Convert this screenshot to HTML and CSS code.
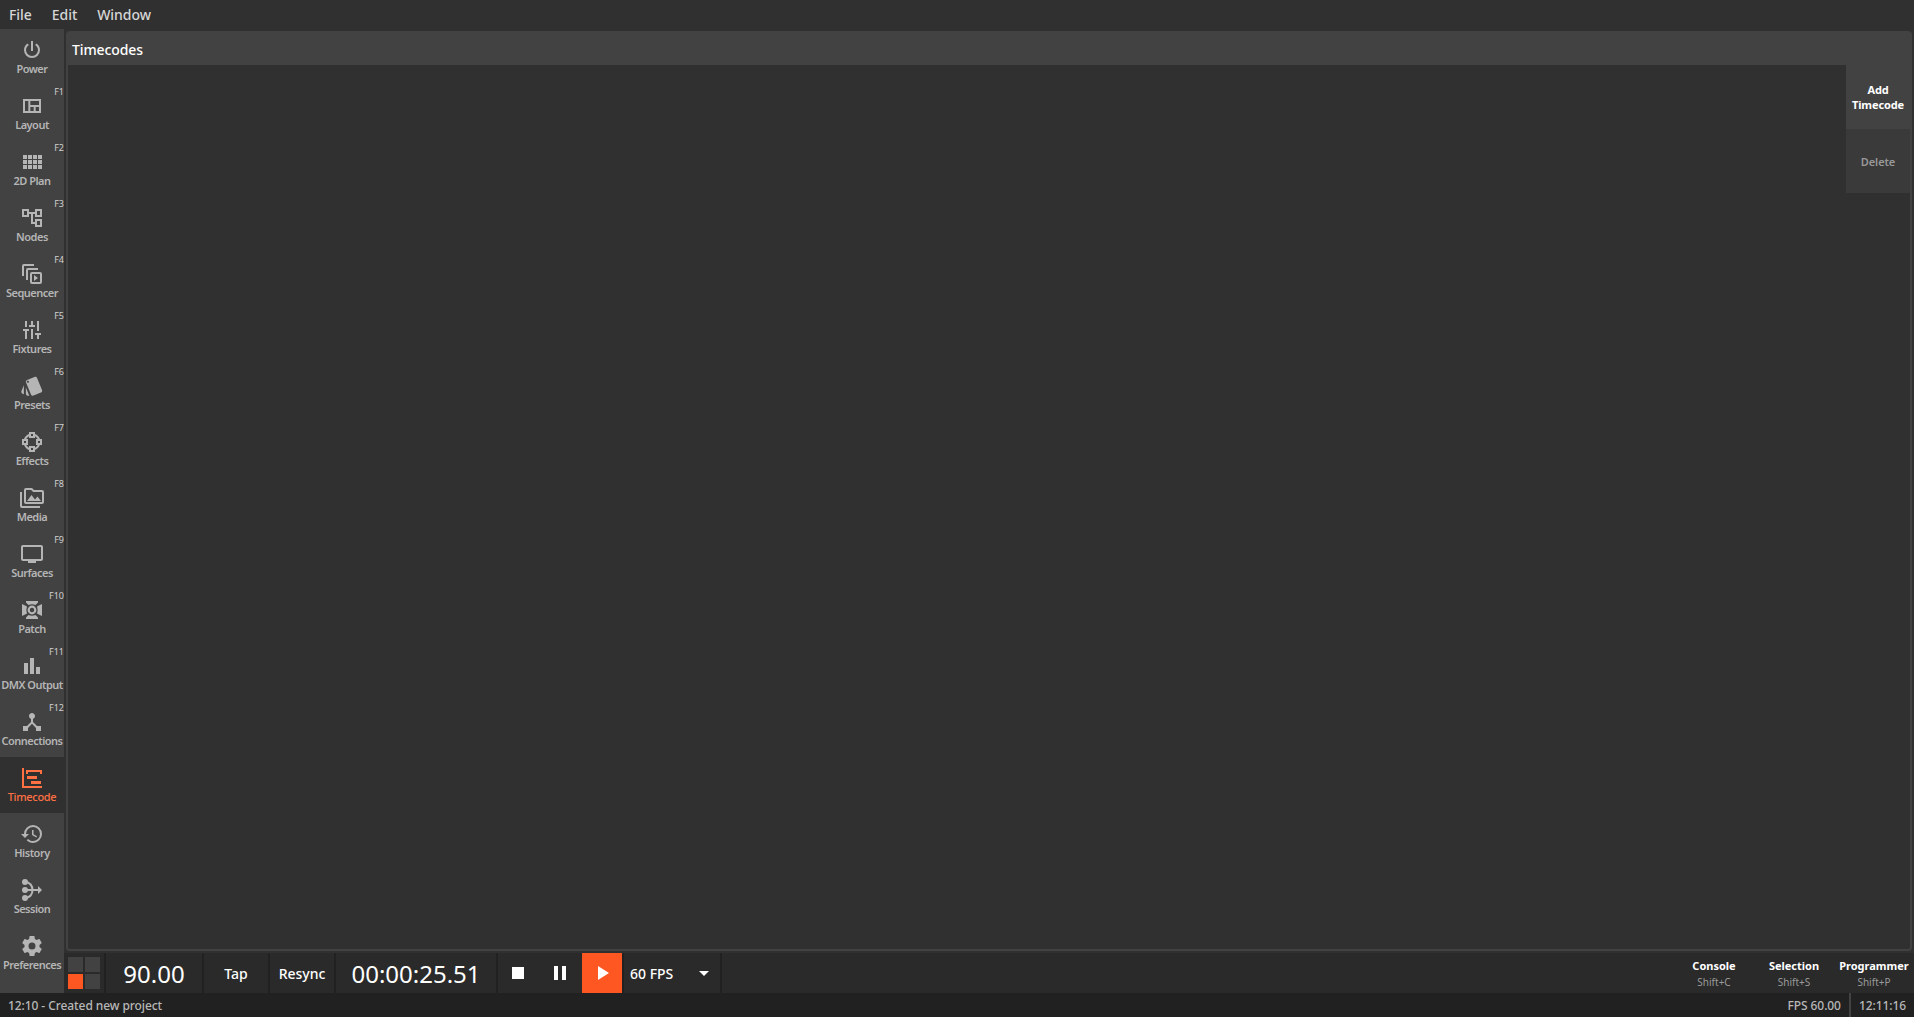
FILE: index.html
```html
<!DOCTYPE html>
<html lang="en">
<head>
<meta charset="utf-8">
<title>Timecodes</title>
<link rel="stylesheet" href="styles.css">
</head>
<body>
<nav class="menubar"><span>File</span><span>Edit</span><span>Window</span></nav>
<div class="workspace">
  <aside class="sidebar">
    <div class="nav-item"><svg viewBox="0 0 24 24"><path d="M16.56,5.44L15.11,6.89C16.84,7.94 18,9.83 18,12A6,6 0 0,1 12,18A6,6 0 0,1 6,12C6,9.83 7.16,7.94 8.88,6.88L7.44,5.44C5.36,6.88 4,9.28 4,12A8,8 0 0,0 12,20A8,8 0 0,0 20,12C20,9.28 18.64,6.88 16.56,5.44M13,3H11V13H13"/></svg><span>Power</span></div>
    <div class="nav-item"><kbd>F1</kbd><svg viewBox="0 0 24 24"><path d="M3,5v14h18V5H3z M8.33,17H5V7h3.33V17z M13.67,17h-3.33v-4h3.33V17z M19,17h-3.33v-4H19V17z M19,11h-8.67V7H19V11z"/></svg><span>Layout</span></div>
    <div class="nav-item"><kbd>F2</kbd><svg viewBox="0 0 24 24"><path d="M3 9h4V5H3v4zm0 5h4v-4H3v4zm5 0h4v-4H8v4zm5 0h4v-4h-4v4zM8 9h4V5H8v4zm5-4v4h4V5h-4zm5 9h4v-4h-4v4zM3 19h4v-4H3v4zm5 0h4v-4H8v4zm5 0h4v-4h-4v4zm5 0h4v-4h-4v4zm0-14v4h4V5h-4z"/></svg><span>2D Plan</span></div>
    <div class="nav-item"><kbd>F3</kbd><svg viewBox="0 0 24 24"><path d="M22 11V3h-7v3H9V3H2v8h7V8h2v10h4v3h7v-8h-7v3h-2V8h2v3h7zM7 9H4V5h3v4zm10 6h3v4h-3v-4zm0-10h3v4h-3V5z"/></svg><span>Nodes</span></div>
    <div class="nav-item"><kbd>F4</kbd><svg viewBox="0 0 24 24"><path d="M4,2A2,2 0 0 0 2,4V14H4V4H14V2Z M8,6A2,2 0 0 0 6,8V18H8V8H18V6Z M12,10A2,2 0 0 0 10,12V20A2,2 0 0 0 12,22H20A2,2 0 0 0 22,20V12A2,2 0 0 0 20,10Z M12,12H20V20H12Z M14,13V19L18,16Z"/></svg><span>Sequencer</span></div>
    <div class="nav-item"><kbd>F5</kbd><svg viewBox="0 0 24 24"><path d="M5,3H7V9H5Z M3,11H9V13H7V21H5V13H3Z M11,3H13V7H15V9H9V7H11Z M11,11H13V21H11Z M17,3H19V13H17Z M15,15H21V17H19V21H17V17H15Z"/></svg><span>Fixtures</span></div>
    <div class="nav-item"><kbd>F6</kbd><svg viewBox="0 0 24 24"><path d="M2.53 19.65l1.34.56v-9.03l-2.43 5.86c-.41 1.02.08 2.19 1.09 2.61zm19.5-3.7L17.07 3.98c-.31-.75-1.04-1.21-1.81-1.23-.26 0-.53.04-.79.15L7.1 5.95c-.75.31-1.21 1.03-1.23 1.8-.01.27.04.54.15.8l4.96 11.97c.31.76 1.05 1.22 1.83 1.23.26 0 .52-.05.77-.15l7.36-3.05c1.02-.42 1.51-1.59 1.09-2.6zM7.88 8.75c-.55 0-1-.45-1-1s.45-1 1-1 1 .45 1 1-.45 1-1 1zm-2 11c0 1.1.9 2 2 2h1.45l-3.45-8.34v6.34z"/></svg><span>Presets</span></div>
    <div class="nav-item"><kbd>F7</kbd><svg viewBox="0 0 24 24"><path d="M9,2V4.06C6.72,4.92 4.92,6.72 4.05,9H2V15H4.06C4.92,17.28 6.72,19.09 9,19.95V22H15V19.94C17.28,19.08 19.09,17.28 19.95,15H22V9H19.94C19.08,6.72 17.28,4.92 15,4.05V2M11,4H13V6H11M9,6.25V8H15V6.25C16.18,6.86 17.14,7.82 17.75,9H16V15H17.75C17.14,16.18 16.18,17.14 15,17.75V16H9V17.75C7.82,17.14 6.86,16.18 6.25,15H8V9H6.25C6.86,7.82 7.82,6.86 9,6.25M4,11H6V13H4M18,11H20V13H18M11,18H13V20H11"/></svg><span>Effects</span></div>
    <div class="nav-item"><kbd>F8</kbd><svg viewBox="0 0 24 24"><path d="M2,6H0V20A2,2 0 0,0 2,22H20V20H2V6Z M22,4H14L12,2H6A2,2 0 0,0 4,4V16A2,2 0 0,0 6,18H22A2,2 0 0,0 24,16V6A2,2 0 0,0 22,4Z M6,4H11.17L13.17,6H22V16H6Z M7,15L11.5,9L15,13.5L17.5,10.5L21,15Z"/></svg><span>Media</span></div>
    <div class="nav-item"><kbd>F9</kbd><svg viewBox="0 0 24 24"><path d="M21 3H3c-1.1 0-2 .9-2 2v12c0 1.1.9 2 2 2h5v2h8v-2h5c1.1 0 1.99-.9 1.99-2L23 5c0-1.1-.9-2-2-2zm0 14H3V5h18v12z"/></svg><span>Surfaces</span></div>
    <div class="nav-item"><kbd>F10</kbd><svg viewBox="0 0 24 24"><path d="M6,3H18V4.5L15.5,7Q12,5.6 8.5,7L6,4.5Z M6,21H18V19.5L15.5,17Q12,18.4 8.5,17L6,19.5Z M2,6L7,8.5Q5.6,12 7,15.5L2,18Z M22,6L17,8.5Q18.4,12 17,15.5L22,18Z M12,7.6A4.4,4.4 0 1 0 12,16.4A4.4,4.4 0 1 0 12,7.6Z M12,9.8A2.2,2.2 0 1 1 12,14.2A2.2,2.2 0 1 1 12,9.8Z"/></svg><span>Patch</span></div>
    <div class="nav-item"><kbd>F11</kbd><svg viewBox="0 0 24 24"><path d="M4,9H8V20H4Z M10,4H14V20H10Z M16,13H20V20H16Z"/></svg><span>DMX Output</span></div>
    <div class="nav-item"><kbd>F12</kbd><svg viewBox="0 0 24 24"><path d="M17,16l-4,-4V8.82C14.16,8.4 15,7.3 15,6c0,-1.66 -1.34,-3 -3,-3S9,4.34 9,6c0,1.3 0.84,2.4 2,2.82V12l-4,4H3v5h5v-3.05l4,-4.2 4,4.2V21h5v-5h-4z"/></svg><span>Connections</span></div>
    <div class="nav-item active"><svg viewBox="0 0 24 24"><path d="M2,2H4V20H22V22H2V2M7,10H17V13H7V10M11,15H21V18H11V15M6,4H22V8H20V6H8V8H6V4Z"/></svg><span>Timecode</span></div>
    <div class="nav-item"><svg viewBox="0 0 24 24"><path d="M13.5,8H12V13L16.28,15.54L17,14.33L13.5,12.25V8M13,3A9,9 0 0,0 4,12H1L4.96,16.03L9,12H6A7,7 0 0,1 13,5A7,7 0 0,1 20,12A7,7 0 0,1 13,19C11.07,19 9.32,18.21 8.06,16.94L6.64,18.36C8.27,20 10.5,21 13,21A9,9 0 0,0 22,12A9,9 0 0,0 13,3"/></svg><span>History</span></div>
    <div class="nav-item"><svg viewBox="0 0 24 24"><circle cx="5" cy="4" r="3"/><circle cx="5" cy="12" r="3"/><circle cx="5" cy="20" r="3"/><path class="line" d="M5,4C10,4 12.5,8 12.5,12C12.5,16 10,20 5,20M5,12H20"/><path d="M18,8L22,12L18,16Z"/></svg><span>Session</span></div>
    <div class="nav-item"><svg viewBox="0 0 24 24"><path d="M12,15.5A3.5,3.5 0 0,1 8.5,12A3.5,3.5 0 0,1 12,8.5A3.5,3.5 0 0,1 15.5,12A3.5,3.5 0 0,1 12,15.5M19.43,12.97C19.47,12.65 19.5,12.33 19.5,12C19.5,11.67 19.47,11.34 19.43,11L21.54,9.37C21.73,9.22 21.78,8.95 21.66,8.73L19.66,5.27C19.54,5.05 19.27,4.96 19.05,5.05L16.56,6.05C16.04,5.66 15.5,5.32 14.87,5.07L14.5,2.42C14.46,2.18 14.25,2 14,2H10C9.75,2 9.54,2.18 9.5,2.42L9.13,5.07C8.5,5.32 7.96,5.66 7.44,6.05L4.95,5.05C4.73,4.96 4.46,5.05 4.34,5.27L2.34,8.73C2.21,8.95 2.27,9.22 2.46,9.37L4.57,11C4.53,11.34 4.5,11.67 4.5,12C4.5,12.33 4.53,12.65 4.57,12.97L2.46,14.63C2.27,14.78 2.21,15.05 2.34,15.27L4.34,18.73C4.46,18.95 4.73,19.03 4.95,18.95L7.44,17.94C7.96,18.34 8.5,18.68 9.13,18.93L9.5,21.58C9.54,21.82 9.75,22 10,22H14C14.25,22 14.46,21.82 14.5,21.58L14.87,18.93C15.5,18.67 16.04,18.34 16.56,17.94L19.05,18.95C19.27,19.03 19.54,18.95 19.66,18.73L21.66,15.27C21.78,15.05 21.73,14.78 21.54,14.63L19.43,12.97Z"/></svg><span>Preferences</span></div>
  </aside>
  <div class="main">
    <section class="panel">
      <h1 class="panel-title">Timecodes</h1>
      <div class="panel-body">
        <div class="actions">
          <button class="action">Add Timecode</button>
          <button class="action disabled">Delete</button>
        </div>
      </div>
    </section>
    <div class="transport">
      <div class="beats"><i></i><i></i><i class="on"></i><i></i></div>
      <div class="cell bpm">90.00</div>
      <div class="cell tap">Tap</div>
      <div class="cell resync">Resync</div>
      <div class="cell clock">00:00:25.51</div>
      <div class="controls">
        <svg viewBox="0 0 24 24"><path d="M6,6H18V18H6Z"/></svg>
        <svg viewBox="0 0 24 24"><path d="M6,5H10V19H6Z M14,5H18V19H14Z"/></svg>
        <svg class="play" viewBox="0 0 24 24"><path d="M8,5V19L19,12Z"/></svg>
      </div>
      <div class="cell rate"><span>60 FPS</span><svg viewBox="0 0 10 5"><path d="M0,0H10L5,5Z"/></svg></div>
      <div class="shortcuts">
        <div><b>Console</b><small>Shift+C</small></div>
        <div><b>Selection</b><small>Shift+S</small></div>
        <div><b>Programmer</b><small>Shift+P</small></div>
      </div>
    </div>
  </div>
</div>
<footer class="status"><span>12:10 - Created new project</span><span class="fps">FPS 60.00</span><span class="time">12:11:16</span></footer>
</body>
</html>
```
FILE: styles.css
```css
* { box-sizing: border-box; }
body {
  margin: 0;
  height: 100vh;
  display: flex;
  flex-direction: column;
  overflow: hidden;
  background: #303030;
  color: #fff;
  font: 14px/20px "Noto Sans", sans-serif;
}
svg { display: block; fill: currentColor; fill-rule: evenodd; flex: none; }
.menubar { height: 29px; flex: none; display: flex; gap: 20px; padding: 5px 9px; color: #d6d6d6; font-weight: 500; letter-spacing: -0.05px; }
.workspace { flex: 1; min-height: 0; display: flex; }
.sidebar { width: 64px; flex: none; background: #424242; }
.nav-item {
  position: relative;
  height: 56px;
  padding-top: 9px;
  display: flex;
  flex-direction: column;
  align-items: center;
  color: #b5b5b5;
  font-size: 11px;
  line-height: 14px;
  font-weight: 600;
  letter-spacing: -0.5px;
  white-space: nowrap;
}
.nav-item svg { width: 24px; height: 24px; }
.nav-item kbd { position: absolute; right: 0; top: 1px; font: 9px/12px "Noto Sans", sans-serif; letter-spacing: 0; color: #d0d0d0; }
.nav-item.active { background: #303030; color: #ff7043; font-weight: 500; letter-spacing: -0.3px; }
.line { fill: none; stroke: currentColor; stroke-width: 2; }
.main { flex: 1; min-width: 0; display: flex; flex-direction: column; }
.panel {
  flex: 1;
  margin: 2px;
  display: flex;
  flex-direction: column;
  border: 2px solid #424242;
  border-top: 0;
  border-radius: 4px;
}
.panel-title { height: 34px; margin: 0; padding: 9px 4px 5px; background: #424242; border-radius: 2px 2px 0 0; font-size: 14px; line-height: 20px; font-weight: 500; letter-spacing: -0.1px; }
.panel-body { flex: 1; display: flex; justify-content: flex-end; }
.actions { width: 64px; }
.action {
  display: block;
  width: 64px;
  height: 64px;
  padding: 0;
  border: 0;
  background: #424242;
  color: #fff;
  font: 700 11px/15px "Noto Sans", sans-serif;
  letter-spacing: -0.1px;
}
.action.disabled { background: #3a3a3a; color: #999; font-weight: 600; }
.transport { height: 40px; flex: none; display: flex; background: #2a2a2a; }
.beats { width: 40px; padding: 4px; display: grid; grid-template-columns: 15px 15px; grid-template-rows: 15px 15px; gap: 2px; }
.beats i { background: #424242; }
.beats .on { background: #ff5722; }
.cell { display: flex; align-items: center; justify-content: center; padding-top: 2px; border-left: 2px solid #212121; font-weight: 500; }
.bpm, .clock { font-size: 24px; font-weight: 400; }
.bpm { width: 98px; }
.tap { width: 66px; }
.resync { width: 66px; }
.clock { width: 162px; }
.controls { display: flex; border-left: 2px solid #212121; }
.controls svg { width: 42px; height: 40px; padding: 8px 10px 8px 8px; }
.controls .play { width: 40px; padding: 8px; background: #ff5722; }
.rate { width: 100px; justify-content: space-between; padding: 2px 11px 0 6px; border-right: 2px solid #212121; }
.rate svg { width: 10px; height: 5px; margin-top: -2px; }
.shortcuts { margin-left: auto; display: flex; }
.shortcuts div { width: 80px; padding-top: 5px; text-align: center; }
.shortcuts b, .shortcuts small { display: block; font-size: 11px; line-height: 16px; }
.shortcuts b { font-weight: 700; }
.shortcuts small { font-size: 10px; color: #9a9a9a; }
.status { height: 24px; flex: none; display: flex; padding-left: 8px; background: #212121; color: #b8b8b8; font-size: 12px; line-height: 26px; font-weight: 500; letter-spacing: -0.08px; }
.fps { margin-left: auto; padding-right: 8px; }
.time { padding: 0 8px; border-left: 2px solid #424242; }
```
